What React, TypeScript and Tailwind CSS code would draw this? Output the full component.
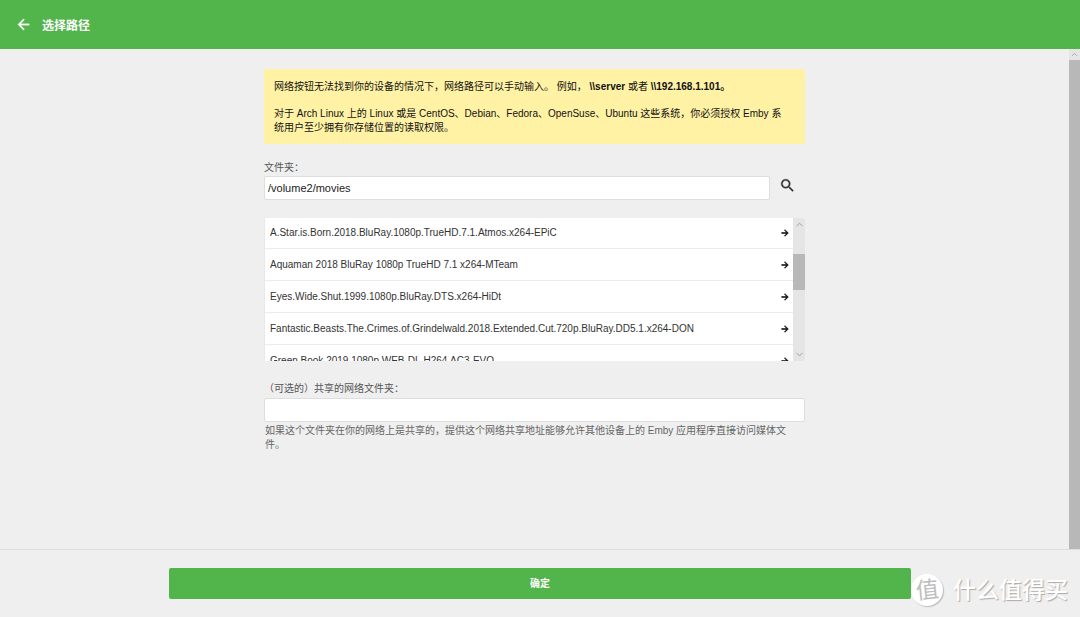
import { useState } from "react";
import { ChevronDown, ChevronUp } from "lucide-react";

const folders = [
  "A.Star.is.Born.2018.BluRay.1080p.TrueHD.7.1.Atmos.x264-EPiC",
  "Aquaman 2018 BluRay 1080p TrueHD 7.1 x264-MTeam",
  "Eyes.Wide.Shut.1999.1080p.BluRay.DTS.x264-HiDt",
  "Fantastic.Beasts.The.Crimes.of.Grindelwald.2018.Extended.Cut.720p.BluRay.DD5.1.x264-DON",
  "Green.Book.2019.1080p.WEB-DL.H264.AC3-EVO",
];

function BackIcon() {
  return (
    <svg viewBox="0 0 24 24" className="size-[17px] shrink-0" fill="currentColor" stroke="currentColor" strokeWidth="0.4">
      <path d="M20 11H7.83l5.59-5.59L12 4l-8 8 8 8 1.41-1.41L7.83 13H20v-2z" />
    </svg>
  );
}

function ForwardIcon() {
  return (
    <svg viewBox="0 0 24 24" className="size-[10px] shrink-0 text-black" fill="currentColor" stroke="currentColor" strokeWidth="1.2">
      <path d="M12 4l-1.41 1.41L16.17 11H4v2h12.17l-5.58 5.59L12 20l8-8z" />
    </svg>
  );
}

function SearchIcon() {
  return (
    <svg viewBox="0 0 24 24" className="size-[17px] text-[#333]" fill="currentColor" stroke="currentColor" strokeWidth="0.5">
      <path d="M15.5 14h-.79l-.28-.27A6.471 6.471 0 0 0 16 9.5 6.5 6.5 0 1 0 9.5 16c1.61 0 3.09-.59 4.23-1.57l.27.28v.79l5 4.99L20.49 19l-4.99-5zm-6 0C7.01 14 5 11.99 5 9.5S7.01 5 9.5 5 14 7.01 14 9.5 11.99 14 9.5 14z" />
    </svg>
  );
}

function Header() {
  return (
    <header className="flex h-[49px] shrink-0 items-center gap-3 bg-[#52b54b] px-4 text-white">
      <button type="button" aria-label="返回" className="flex size-[14px] items-center justify-center">
        <BackIcon />
      </button>
      <h1 className="pt-[2px] text-[12px] leading-4 font-bold">选择路径</h1>
    </header>
  );
}

function Notice() {
  return (
    <div className="rounded-xs bg-[#fff2a5] pt-[11px] pr-4 pb-[9px] pl-[10px] text-[10px] leading-[14px] text-[#111]">
      <p>
        网络按钮无法找到你的设备的情况下，网络路径可以手动输入。 例如， <b>\\server</b> 或者 <b>\\192.168.1.101。</b>
      </p>
      <p className="mt-[13px]">
        对于 Arch Linux 上的 Linux 或是 CentOS、Debian、Fedora、OpenSuse、Ubuntu 这些系统，你必须授权 Emby 系统用户至少拥有你存储位置的读取权限。
      </p>
    </div>
  );
}

function FolderList({ onPick }: { onPick: (name: string) => void }) {
  return (
    <div className="mt-[18px] flex h-[143px] overflow-hidden rounded-xs bg-white">
      <ul className="-mt-px min-w-0 flex-1 border-l border-[#e8e8e8]">
        {folders.map((name) => (
          <li key={name}>
            <button
              type="button"
              onClick={() => onPick(name)}
              className="flex h-8 w-full items-center justify-between border-b border-[#ececec] pr-[3px] pl-[5px] text-left text-[10px] text-[#333]"
            >
              <span className="truncate">{name}</span>
              <ForwardIcon />
            </button>
          </li>
        ))}
      </ul>
      {/* Scrollbar */}
      <div className="flex w-3 flex-col items-center bg-[#e5e5e5] text-[#999]">
        <ChevronUp size={11} className="my-[1px] shrink-0" />
        <div className="mt-[23px] h-9 w-full bg-[#b8b8b8]" />
        <ChevronDown size={11} className="mt-auto mb-[1px] shrink-0" />
      </div>
    </div>
  );
}

function Watermark() {
  return (
    <div
      className="absolute right-3 bottom-[11px] flex items-center gap-[10px] text-white"
      style={{ textShadow: "1px 1px 1px #aaa" }}
    >
      <span className="flex size-8 items-center justify-center rounded-full bg-white text-[23px] leading-none text-[#bdbdbd] shadow-[1px_1px_1px_#bbb] [text-shadow:none]">
        <span className="-rotate-6">值</span>
      </span>
      <span className="text-[23px] leading-8 font-medium">什么值得买</span>
    </div>
  );
}

export default function App() {
  const [path, setPath] = useState("/volume2/movies");
  const [share, setShare] = useState("");

  return (
    <div className="relative flex h-screen flex-col bg-[#efefef] font-['Liberation_Sans','Noto_Sans_CJK_SC',sans-serif]">
      <Header />

      <div className="flex min-h-0 flex-1">
        <main className="min-w-0 flex-1 overflow-hidden pt-[20px]">
          <form id="path-form" onSubmit={(e) => e.preventDefault()} className="mx-auto w-full max-w-[541px]">
            <Notice />

            <label htmlFor="path" className="mt-4 block text-[10px] leading-4 text-[#555]">
              文件夹：
            </label>
            <div className="flex items-center">
              <input
                id="path"
                value={path}
                onChange={(e) => setPath(e.target.value)}
                className="h-6 min-w-0 flex-1 rounded-xs border border-[#dedede] bg-white px-[3px] text-[11px] text-[#222] outline-none"
              />
              <button type="button" aria-label="搜索" className="flex h-6 w-[35px] items-start justify-center pt-px">
                <SearchIcon />
              </button>
            </div>

            <FolderList onPick={(name) => setPath(`/volume2/movies/${name}`)} />

            <label htmlFor="share" className="mt-5 block text-[10px] leading-4 text-[#555]">
              （可选的）共享的网络文件夹：
            </label>
            <input
              id="share"
              value={share}
              onChange={(e) => setShare(e.target.value)}
              className="mt-px block h-6 w-full rounded-xs border border-[#dedede] bg-white px-[3px] text-[11px] text-[#222] outline-none"
            />
            <p className="mt-[2px] px-[1px] text-[10px] leading-[14px] text-[#666]">
              如果这个文件夹在你的网络上是共享的，提供这个网络共享地址能够允许其他设备上的 Emby 应用程序直接访问媒体文件。
            </p>
          </form>
        </main>

        {/* Page scrollbar */}
        <div className="flex w-[11px] shrink-0 flex-col items-center bg-[#e5e5e5] text-[#999]">
          <ChevronUp size={9} className="my-[1px] shrink-0" />
          <div className="w-full flex-1 bg-[#b8b8b8]" />
        </div>
      </div>

      <footer className="flex h-[68px] shrink-0 items-center justify-center border-t border-[#dedede]">
        <button
          type="submit"
          form="path-form"
          className="h-[31px] w-full max-w-[742px] rounded-xs bg-[#52b54b] text-[10px] font-bold text-white"
        >
          确定
        </button>
      </footer>

      <Watermark />
    </div>
  );
}
